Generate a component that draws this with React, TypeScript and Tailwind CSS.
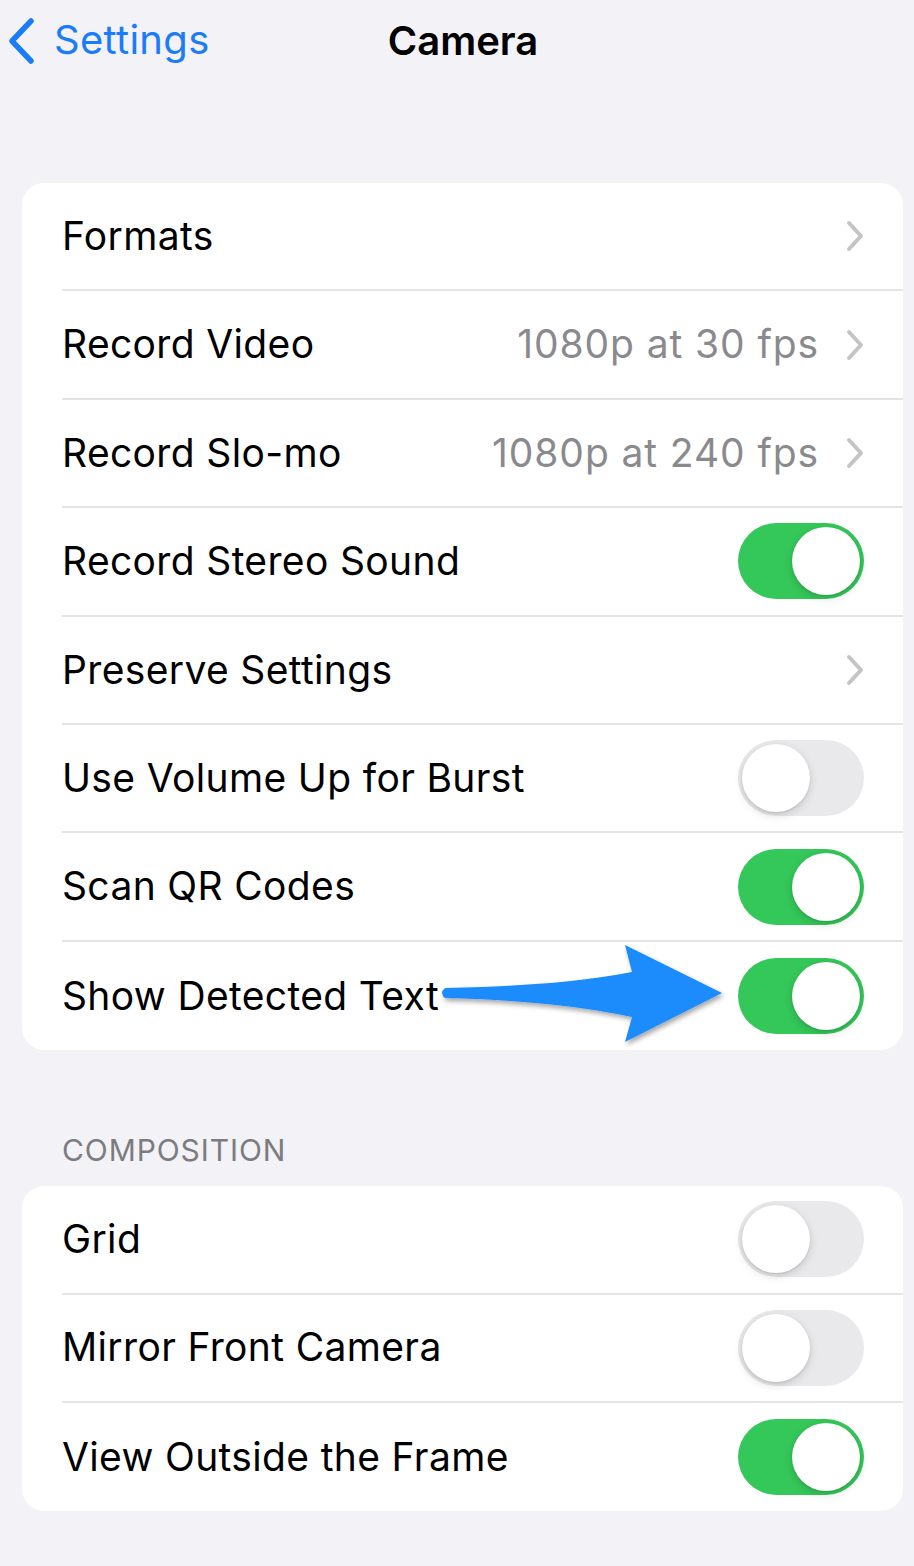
import React from 'react';

type Row = {
  label: string;
  value?: string;
  chevron?: boolean;
  toggle?: boolean;
  on?: boolean;
};

const mainRows: Row[] = [
  { label: 'Formats', chevron: true },
  { label: 'Record Video', value: '1080p at 30 fps', chevron: true },
  { label: 'Record Slo-mo', value: '1080p at 240 fps', chevron: true },
  { label: 'Record Stereo Sound', toggle: true, on: true },
  { label: 'Preserve Settings', chevron: true },
  { label: 'Use Volume Up for Burst', toggle: true, on: false },
  { label: 'Scan QR Codes', toggle: true, on: true },
  { label: 'Show Detected Text', toggle: true, on: true },
];

const compositionRows: Row[] = [
  { label: 'Grid', toggle: true, on: false },
  { label: 'Mirror Front Camera', toggle: true, on: false },
  { label: 'View Outside the Frame', toggle: true, on: true },
];

const Chevron = () => (
  <svg width="20" height="32" viewBox="0 0 20 32" fill="none" className="shrink-0">
    <path d="M4 3 L16 16 L4 29" stroke="#c4c4c7" strokeWidth="4" strokeLinecap="round" strokeLinejoin="round" />
  </svg>
);

const Toggle = ({ on }: { on?: boolean }) => (
  <div
    className={`relative w-[126px] h-[76px] rounded-full shrink-0 ${on ? 'bg-[#34c759]' : 'bg-[#e9e9eb]'}`}
  >
    <div
      className={`absolute top-[4px] w-[68px] h-[68px] rounded-full bg-white shadow-[0_3px_8px_rgba(0,0,0,0.15),0_1px_2px_rgba(0,0,0,0.1)] ${
        on ? 'right-[4px]' : 'left-[4px]'
      }`}
    />
  </div>
);

const SettingsCard = ({ rows }: { rows: Row[] }) => (
  <div className="ml-[22px] mr-[11px] bg-white rounded-[22px] overflow-hidden">
    {rows.map((row, i) => (
      <div key={row.label} className="flex h-[108.4px] pl-[40px]">
        <div
          className={`flex-1 flex items-center justify-between ${
            row.chevron ? 'pr-[38px]' : 'pr-[39px]'
          } ${i < rows.length - 1 ? 'border-b-2 border-[#e4e4e7]' : ''}`}
        >
          <span className="text-[39px] text-black tracking-[0.35px]">{row.label}</span>
          <div className="flex items-center gap-[26px]">
            {row.value && <span className="text-[39px] text-[#8a8a8e] tracking-[0.9px]">{row.value}</span>}
            {row.chevron && <Chevron />}
            {row.toggle && <Toggle on={row.on} />}
          </div>
        </div>
      </div>
    ))}
  </div>
);

export default function App() {
  return (
    <div
      className="relative w-[914px] min-h-[1566px] bg-[#f2f2f7] overflow-hidden"
      style={{ fontFamily: 'Inter, "Noto Sans", sans-serif' }}
    >
      <header className="relative h-[183px]">
        <div className="absolute left-[6px] top-[16px] flex items-center gap-[18px]">
          <svg width="30" height="50" viewBox="0 0 30 50" fill="none">
            <path d="M25 5 L6 25 L25 45" stroke="#1a7cf7" strokeWidth="5.5" strokeLinecap="round" strokeLinejoin="round" />
          </svg>
          <span className="text-[40px] text-[#1a7cf7] leading-none -mt-[2px] tracking-[0.3px]">Settings</span>
        </div>
        <div className="absolute left-0 right-0 top-[21px] text-center">
          <span className="text-[40px] font-semibold text-black leading-none pl-[12px]">Camera</span>
        </div>
      </header>

      <SettingsCard rows={mainRows} />

      <div className="pl-[62px] pt-[85px] pb-[20px] text-[30px] text-[#7c7c80] leading-[31px] tracking-[0.9px]">
        COMPOSITION
      </div>

      <SettingsCard rows={compositionRows} />

      <svg
        className="absolute left-0 top-0 pointer-events-none"
        width="914"
        height="1566"
        viewBox="0 0 914 1566"
      >
        <defs>
          <filter id="arrowShadow" x="-10%" y="-20%" width="120%" height="140%">
            <feDropShadow dx="2" dy="3" stdDeviation="2.5" floodColor="#000" floodOpacity="0.35" />
          </filter>
        </defs>
        <path
          d="M445 988 Q560 986 632 972 L625 945 L722 993 L625 1042 L632 1017 Q560 1001 445 998 Q439 993 445 988 Z"
          fill="#1b8cfd"
          filter="url(#arrowShadow)"
        />
      </svg>
    </div>
  );
}
